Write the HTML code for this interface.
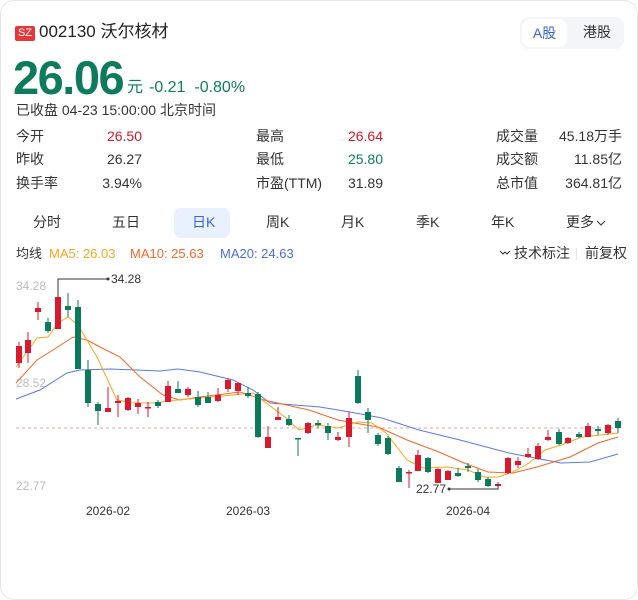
<!DOCTYPE html>
<html><head><meta charset="utf-8"><style>
*{margin:0;padding:0;box-sizing:border-box}
body{width:638px;height:580px;background:#fff;font-family:"Liberation Sans","Noto Sans CJK SC",sans-serif;position:relative;overflow:hidden;color:#222}
.card{position:absolute;left:0;top:0;width:638px;height:600px;border:1px solid #e6e6e6;border-radius:14px}
.a{position:absolute;white-space:nowrap;line-height:1.2}
.r{color:#d11a2a}.g{color:#0f7b5d}
.lbl{font-size:14px;color:#333}
.val{font-size:14px;text-align:right}
.tab{font-size:14px;color:#333;top:214px}
</style></head><body>
<div class="card"></div>
<div class="a" style="left:15px;top:26px;width:20px;height:15px;background:#e5383b;border-radius:2px;color:#fff;font-size:11px;line-height:15px;text-align:center">SZ</div>
<div class="a" style="left:39px;top:22px;font-size:17px;color:#222">002130 沃尔核材</div>
<div class="a" style="left:520px;top:17px;width:104px;height:32px;background:#f3f5f8;border-radius:9px"></div>
<div class="a" style="left:522px;top:19px;width:45px;height:28px;background:#fff;border-radius:8px;color:#3d63d8;font-size:14px;line-height:28px;text-align:center">A股</div>
<div class="a" style="left:583px;top:24px;font-size:14px;color:#333">港股</div>
<div class="a g" style="left:13px;top:54px;font-size:47px;font-weight:bold;letter-spacing:-1.5px;line-height:48px">26.06</div>
<div class="a g" style="left:127px;top:78px;font-size:16px">元</div>
<div class="a g" style="left:149px;top:78px;font-size:16px">-0.21 &nbsp;-0.80%</div>
<div class="a" style="left:16px;top:102px;font-size:14px;color:#333">已收盘 04-23 15:00:00 北京时间</div>

<div class="a lbl" style="left:16px;top:128px">今开</div>
<div class="a lbl" style="left:16px;top:151px">昨收</div>
<div class="a lbl" style="left:16px;top:175px">换手率</div>
<div class="a val r" style="right:496px;top:128px">26.50</div>
<div class="a val" style="right:496px;top:151px;color:#333">26.27</div>
<div class="a val" style="right:496px;top:175px;color:#333">3.94%</div>
<div class="a lbl" style="left:256px;top:128px">最高</div>
<div class="a lbl" style="left:256px;top:151px">最低</div>
<div class="a lbl" style="left:256px;top:175px">市盈(TTM)</div>
<div class="a val r" style="right:255px;top:128px">26.64</div>
<div class="a val g" style="right:255px;top:151px">25.80</div>
<div class="a val" style="right:255px;top:175px;color:#333">31.89</div>
<div class="a lbl" style="left:496px;top:128px">成交量</div>
<div class="a lbl" style="left:496px;top:151px">成交额</div>
<div class="a lbl" style="left:496px;top:175px">总市值</div>
<div class="a val" style="right:16px;top:128px;color:#333">45.18万手</div>
<div class="a val" style="right:16px;top:151px;color:#333">11.85亿</div>
<div class="a val" style="right:16px;top:175px;color:#333">364.81亿</div>

<div class="a" style="left:174px;top:208px;width:56px;height:30px;background:#e8f1fd;border-radius:7px"></div>
<div class="a tab" style="left:33px">分时</div>
<div class="a tab" style="left:112px">五日</div>
<div class="a tab" style="left:192px;color:#3d63d8">日K</div>
<div class="a tab" style="left:266px">周K</div>
<div class="a tab" style="left:341px">月K</div>
<div class="a tab" style="left:416px">季K</div>
<div class="a tab" style="left:491px">年K</div>
<div class="a tab" style="left:566px">更多</div>
<svg class="a" style="left:596px;top:219px" width="10" height="8"><polyline points="1,2 5,6 9,2" fill="none" stroke="#333" stroke-width="1"/></svg>

<div class="a" style="left:16px;top:246px;font-size:13px;color:#333">均线</div>
<div class="a" style="left:49px;top:246px;font-size:13px;color:#f5a623">MA5: 26.03</div>
<div class="a" style="left:130px;top:246px;font-size:13px;color:#f06a2a">MA10: 25.63</div>
<div class="a" style="left:220px;top:246px;font-size:13px;color:#4a6ee0">MA20: 24.63</div>
<svg class="a" style="left:499px;top:249px" width="12" height="8"><polyline points="1,2 4,5 6,3 8,5 11,2" fill="none" stroke="#333" stroke-width="1"/></svg>
<div class="a" style="left:514px;top:245px;font-size:14px;color:#333">技术标注</div>
<div class="a" style="left:576px;top:248px;width:1px;height:12px;background:#e5e5e5"></div>
<div class="a" style="left:585px;top:245px;font-size:14px;color:#333">前复权</div>

<svg class="a" style="left:0;top:0" width="638" height="580" font-family="Liberation Sans, sans-serif">
<text x="16" y="290" font-size="12" fill="#bbb">34.28</text>
<text x="16" y="387" font-size="12" fill="#bbb">28.52</text>
<text x="16" y="490" font-size="12" fill="#bbb">22.77</text>
<line x1="16" y1="428" x2="622" y2="428" stroke="#f0a0a0" stroke-dasharray="3,3" stroke-width="1"/>
<polyline fill="none" stroke="#5b7be0" stroke-width="1" points="16,399 40,390 67,373 80,370 110,369 160,371 178,369 200,372 233,380 253,390 270,403 320,407 350,412 382,418 419,430 460,440 509,453 561,463 590,462 618,454"/>
<polyline fill="none" stroke="#f06a2a" stroke-width="1" points="16,383 37,360 53,350 73,337 87,340 100,347 120,357 140,377 163,395 180,400 200,397 240,392 264,400 309,410 338,420 354,423 378,427 407,440 439,452 464,463 488,472 513,473 537,467 570,457 598,443 618,437"/>
<polyline fill="none" stroke="#f5a623" stroke-width="1" points="16,367 37,338 48,337 58,323 68,317 78,325 97,357 117,400 133,403 157,403 167,401 200,398 233,395 253,393 262,400 285,417 299,430 317,425 338,428 358,422 372,423 386,433 407,460 423,468 447,467 468,470 484,477 498,477 513,472 529,463 545,450 561,445 582,437 618,433"/>
<g id="c"></g>
<polyline fill="none" stroke="#333" stroke-width="1" points="58,297 58,279 108,279"/>
<circle cx="108" cy="279" r="1.5" fill="#333"/>
<text x="111" y="283" font-size="12" fill="#333">34.28</text>
<polyline fill="none" stroke="#333" stroke-width="1" points="498,484 498,489 449,489"/>
<circle cx="449" cy="489" r="1.5" fill="#333"/>
<text x="416" y="493" font-size="12" fill="#333">22.77</text>
<text x="86" y="515" font-size="12" fill="#333">2026-02</text>
<text x="226" y="515" font-size="12" fill="#333">2026-03</text>
<text x="446" y="515" font-size="12" fill="#333">2026-04</text>
</svg>
<script>
var d=[[19,'r',346,363,342,368],[28,'r',340,353,332,363],[38,'r',308,312,302,320],[48,'g',322,331,318,333],[58,'r',297,329,279,329],[68,'g',306,310,293,317],[78,'g',307,369,300,369],[88,'g',370,403,360,407],[98,'g',404,411,402,425],[108,'r',408,412,387,412],[118,'r',401,403,395,417],[128,'r',398,410,397,411],[138,'r',403,407,399,414],[148,'r',407,408,402,417],[158,'g',402,406,400,408],[168,'r',386,402,381,402],[178,'g',389,393,381,393],[188,'r',389,395,387,397],[198,'g',397,405,391,407],[208,'g',397,403,392,403],[218,'r',395,401,388,402],[228,'r',380,389,378,392],[238,'r',383,391,382,395],[248,'g',393,396,387,398],[258,'g',394,437,392,438],[268,'r',437,448,426,448],[278,'r',417,420,407,420],[289,'g',419,425,415,426],[298,'g',438,439,438,456],[308,'r',423,433,422,434],[318,'g',423,425,420,428],[328,'g',426,433,423,440],[338,'r',437,440,432,441],[349,'r',418,437,412,447],[358,'g',376,403,370,404],[368,'g',412,420,408,433],[378,'g',435,444,433,446],[388,'g',438,454,436,455],[399,'g',468,482,466,482],[409,'r',472,473,470,488],[418,'r',455,471,450,471],[428,'g',458,472,457,473],[438,'r',469,483,468,483],[448,'r',471,480,470,480],[458,'g',473,476,468,477],[468,'g',466,468,463,472],[478,'g',472,480,469,482],[488,'g',479,486,477,487],[498,'r',484,486,482,488],[508,'r',458,473,457,474],[518,'r',461,465,457,468],[528,'r',454,457,448,458],[538,'r',446,459,443,460],[548,'r',437,440,430,441],[559,'g',432,444,429,445],[568,'r',438,443,437,444],[579,'g',434,437,432,438],[588,'r',426,437,423,437],[598,'g',429,431,426,435],[608,'r',425,433,424,435],[618,'g',421,428,418,433]];
var s='';d.forEach(function(c){var col=c[1]=='r'?'#d9192d':'#0b7a5c';s+='<line x1="'+c[0]+'" x2="'+c[0]+'" y1="'+c[4]+'" y2="'+c[5]+'" stroke="'+col+'"/><rect x="'+(c[0]-3)+'" y="'+c[2]+'" width="6" height="'+Math.max(1.5,c[3]-c[2])+'" fill="'+col+'"/>';});
document.getElementById('c').innerHTML=s;
</script>
</body></html>
